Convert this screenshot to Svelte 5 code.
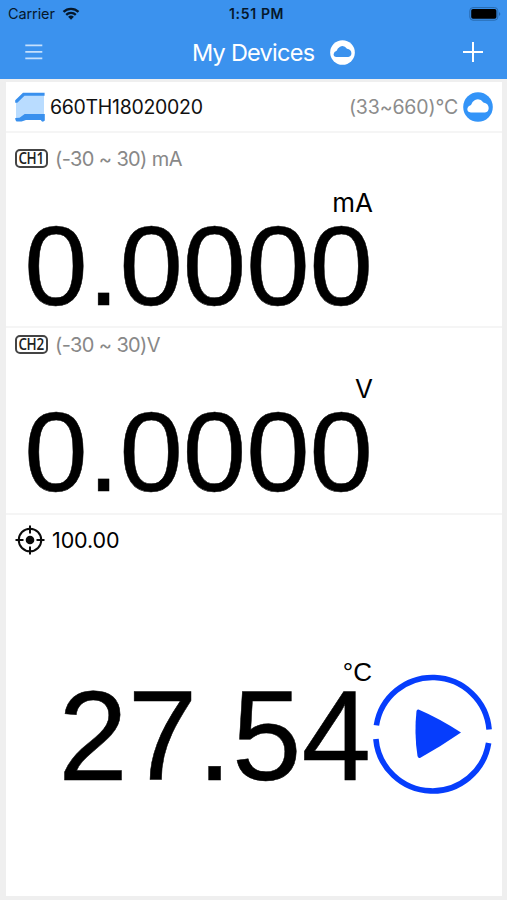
<script>
  const channels = [
    { tag: 'CH1', range: '(-30 ~ 30) mA', value: '0.0000', unit: 'mA' },
    { tag: 'CH2', range: '(-30 ~ 30)V', value: '0.0000', unit: 'V' }
  ];
</script>

{#snippet cloud(size, disc, fill)}
  <svg class="cloud" width={size} height={size} viewBox="0 0 30 30">
    <circle cx="15" cy="15" r="14.8" fill={disc} />
    <path d="M7.8 20.5 Q4.2 20 4.3 17 Q4.7 14 8 13 Q8.8 9.8 12 8 Q17 5.8 20.4 10.6 Q25.5 11.6 25.7 16 Q25.6 20 22 20.5 Z" fill={fill} />
  </svg>
{/snippet}

<div class="screen">
  <header>
    <div class="status">
      <span class="carrier">Carrier</span>
      <svg class="wifi" width="18" height="13" viewBox="0 0 18 13">
        <path d="M1.5 4.9 A10.8 10.8 0 0 1 16.5 4.9" />
        <path d="M4.2 7.8 A6.9 6.9 0 0 1 13.8 7.8" />
        <path d="M9 12.7 L6.1 9.7 Q9 7.4 11.9 9.7 Z" class="solid" />
      </svg>
      <span class="time">1:51 PM</span>
      <svg class="battery" width="33" height="14" viewBox="0 0 33 14">
        <rect x=".8" y=".6" width="28" height="12.6" rx="3.2" fill="none" stroke="#286aaf" stroke-width="1" />
        <rect x="2.2" y="2" width="25.2" height="9.8" rx="1.8" fill="#000" />
        <path d="M30 5 Q32.6 7 30 9 Z" fill="#286aaf" />
      </svg>
    </div>
    <nav>
      <svg class="menu" width="18" height="16" viewBox="0 0 18 16">
        <path d="M.3 1.3 H17.3 M.3 7.8 H17.3 M.3 14.3 H17.3" stroke="#c6e0fc" stroke-width="1.7" />
      </svg>
      <h1>My Devices</h1>
      {@render cloud(25, '#fff', '#3b92ee')}
      <svg class="plus" width="20" height="20" viewBox="0 0 20 20">
        <path d="M0 10 H20 M10 0 V20" stroke="#fff" stroke-width="2" />
      </svg>
    </nav>
  </header>

  <main>
    <div class="device">
      <svg width="30" height="30" viewBox="0 0 30 30">
        <path d="M1 10 L9 2 H29 V23 L10 25 L1 28 Z" fill="#b9dcff" />
        <path d="M.2 8.3 L8 .7 H29.6 V3.8 H9.5 L2.3 10.8 H.2 Z" fill="#3990ee" />
        <path d="M.2 26 L4.5 25.8 L9.7 22 H29.8 V28.5 Q27.5 31 25.7 28 H11 L6.5 29.6 H1.5 Q.2 29.2 .2 26 Z" fill="#3990ee" />
      </svg>
      <span class="serial">660TH18020020</span>
      <span class="span">(33~660)°C</span>
      {@render cloud(30, '#3394f8', '#fff')}
    </div>

    {#each channels as ch}
      <section class="channel">
        <div class="caption">
          <span class="tag"><span>{ch.tag}</span></span>
          <span class="range">{ch.range}</span>
        </div>
        <div class="unit">{ch.unit}</div>
        <div class="value">{ch.value}</div>
      </section>
    {/each}

    <section class="output">
      <div class="target">
        <svg width="30" height="30" viewBox="0 0 30 30" fill="none" stroke="#0a0a0a" stroke-width="2">
          <circle cx="15" cy="15" r="11.3" />
          <circle cx="15" cy="15" r="4.3" fill="#0a0a0a" stroke="none" />
          <path d="M15 .5 V8.5 M15 21.5 V29.5 M.5 15 H8.5 M21.5 15 H29.5" />
        </svg>
        <span>100.00</span>
      </div>
      <div class="reading">
        <div class="figures">
          <div class="degree">°C</div>
          <div class="temp">27.54</div>
        </div>
        <svg class="play" width="120" height="120" viewBox="0 0 120 120">
          <path d="M3.4 51.4 A56.8 56.8 0 0 1 116.1 55.5 M115.6 69 A56.8 56.8 0 0 1 2.9 65" fill="none" stroke="#063dfc" stroke-width="5.6" />
          <path d="M45.5 35.5 Q65.5 44 88 58.5 Q68.5 72 47 84 Q45 84.5 44.5 82 Q41 59 43.5 37 Q44 35 45.5 35.5 Z" fill="#063dfc" />
        </svg>
      </div>
    </section>
  </main>
</div>

<style>
  :global(body) { background: #efefef; }
  .screen {
    box-sizing: border-box;
    width: 507px;
    height: 900px;
    overflow: hidden;
    background: #efefef;
    color: #000;
    font-family: Inter, "Liberation Sans", sans-serif;
    white-space: nowrap;
  }
  svg { display: block; flex: none; }
  header { height: 79px; background: #3b92ee; }
  .status {
    display: flex;
    align-items: center;
    height: 27px;
    padding: 0 5px 0 8px;
    color: #06182b;
    font-size: 14.5px;
    line-height: 27px;
  }
  .carrier { width: 54px; letter-spacing: -.1px; }
  .wifi { fill: none; stroke: #06182b; stroke-width: 2.3; }
  .wifi .solid { fill: #06182b; stroke: none; }
  .time { margin-left: 149px; font-weight: 600; font-size: 14px; letter-spacing: .65px; }
  .battery { margin-left: auto; }
  nav {
    display: flex;
    align-items: center;
    height: 50px;
    padding: 0 24px 0 25px;
  }
  h1 {
    width: 130px;
    margin: 2px 8px 0 149px;
    color: #fff;
    font-size: 23.5px;
    font-weight: 400;
    line-height: 50px;
    letter-spacing: -.75px;
  }
  .plus { margin-left: auto; }
  main {
    display: flex;
    flex-direction: column;
    width: 496px;
    height: 814px;
    margin: 3px 0 0 6px;
    background: #fff;
  }
  .device {
    display: flex;
    align-items: center;
    height: 49px;
    padding: 0 9px 0 9px;
    border-bottom: 2px solid #f5f5f5;
    font-size: 19.5px;
  }
  .serial { margin: 1px 0 0 5px; color: #111; letter-spacing: -.3px; }
  .span { margin: 1px 5px 0 auto; color: #8c8c8c; letter-spacing: -.15px; }
  .channel {
    box-sizing: border-box;
    height: 195px;
    border-bottom: 2px solid #f5f5f5;
  }
  .channel + .channel { height: 187px; }
  .caption {
    display: flex;
    align-items: center;
    height: 50px;
    padding-left: 9px;
  }
  .channel + .channel .caption { height: 32px; }
  .tag {
    box-sizing: border-box;
    display: flex;
    align-items: center;
    justify-content: center;
    width: 33px;
    height: 19px;
    border: 2px solid #444;
    border-radius: 5px;
    color: #222;
    font: 600 15px/15px "Open Sans", sans-serif;
    letter-spacing: -.4px;
  }
  .tag span { transform: scale(.9, 1.05); }
  .range { margin: 1px 0 0 7px; color: #888; font-size: 20px; letter-spacing: -.62px; }
  .unit {
    width: 367px;
    height: 38px;
    text-align: right;
    font-size: 26px;
    line-height: 40px;
  }
  .channel + .channel .unit { margin-top: 9px; }
  .value {
    width: 367px;
    margin-top: -12px;
    text-align: right;
    font: 114px/114px "Liberation Sans", Arial, sans-serif;
    -webkit-text-stroke: .5px #000;
  }
  .output { flex: 1; }
  .target {
    display: flex;
    align-items: center;
    gap: 7px;
    height: 50px;
    padding-left: 9px;
    font-size: 21.5px;
    letter-spacing: -.1px;
  }
  .reading { display: flex; margin-top: 85px; font-family: "Liberation Sans", Arial, sans-serif; }
  .figures { width: 367px; text-align: right; }
  .degree { height: 44px; padding-right: 1px; box-sizing: border-box; font-size: 26px; line-height: 45px; }
  .temp {
    height: 124px;
    margin-top: -20px;
    padding-right: 2px;
    font-size: 125px;
    line-height: 124px;
    transform: scaleY(1.02);
    -webkit-text-stroke: .5px #000;
  }
  .play { margin-top: 24px; }
</style>
